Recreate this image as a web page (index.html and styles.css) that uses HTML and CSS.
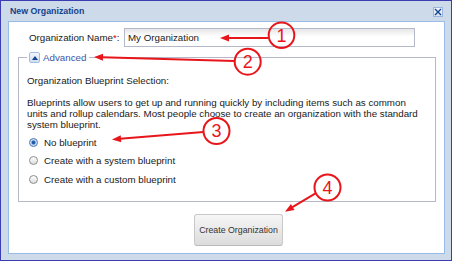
FILE: index.html
```html
<!DOCTYPE html>
<html>
<head>
<meta charset="utf-8">
<title>New Organization</title>
<link rel="stylesheet" href="styles.css">
</head>
<body>
<div class="window">
  <div class="titlebar">
    <span class="title">New Organization</span>
    <span class="close"><svg width="8" height="8" viewBox="0 0 8 8"><path d="M1 1 L7 7 M7 1 L1 7" stroke="#15428b" stroke-width="1.4" fill="none"/></svg></span>
  </div>
  <div class="panel">
    <div class="form-row">
      <label class="field-label">Organization Name<span class="req">*</span>:</label>
      <div class="text-input">My Organization</div>
    </div>
    <fieldset class="advanced">
      <legend class="legend"><span class="toggle"><svg width="6" height="4" viewBox="0 0 6 4"><path d="M0 4 L3 0 L6 4 Z" fill="#15428b"/></svg></span><span class="legend-text">Advanced</span></legend>
      <div class="section-title">Organization Blueprint Selection:</div>
      <p class="desc">Blueprints allow users to get up and running quickly by including items such as common units and rollup calendars. Most people choose to create an organization with the standard system blueprint.</p>
      <div class="radio-list">
        <div class="radio-row"><span class="radio checked"></span><span>No blueprint</span></div>
        <div class="radio-row"><span class="radio"></span><span>Create with a system blueprint</span></div>
        <div class="radio-row"><span class="radio"></span><span>Create with a custom blueprint</span></div>
      </div>
    </fieldset>
    <div class="footer">
      <button class="btn" type="button">Create Organization</button>
    </div>
  </div>
  <svg class="annotations" width="452" height="261" viewBox="0 0 452 261">
    <g fill="none" stroke="#e8161b" stroke-width="2">
      <circle cx="281.5" cy="35.2" r="12.8"/>
      <circle cx="247.7" cy="61.7" r="13"/>
      <circle cx="216.5" cy="131" r="13"/>
      <circle cx="327.5" cy="187.5" r="13"/>
      <line x1="268.5" y1="38" x2="227" y2="38"/>
      <line x1="234.5" y1="61" x2="102" y2="57.3"/>
      <line x1="203.5" y1="132" x2="120" y2="138.8"/>
      <line x1="315.5" y1="193.3" x2="292" y2="207.4"/>
    </g>
    <g fill="#e8161b">
      <polygon points="220,38 229,34.5 229,41.5"/>
      <polygon points="94,57 103.1,53.8 102.9,60.8"/>
      <polygon points="112,139.5 120.7,135.3 121.3,142.3"/>
      <polygon points="285,211.7 290.9,204 294.5,210"/>
    </g>
    <g class="num" fill="#e8161b" text-anchor="middle">
      <text x="281.5" y="41.6">1</text>
      <text x="247.7" y="68.1">2</text>
      <text x="216.5" y="137.4">3</text>
      <text x="327.5" y="193.9">4</text>
    </g>
  </svg>
</div>
</body>
</html>
```
FILE: styles.css
```css
html, body {
  margin: 0;
  padding: 0;
}
body {
  font-family: "Liberation Sans", Arial, sans-serif;
  background: #ffffff;
}
.window {
  position: relative;
  box-sizing: border-box;
  width: 452px;
  height: 261px;
  border: 1px solid #3b3db0;
  background: #cddaea;
  padding: 0 6px 6px 7px;
  display: flex;
  flex-direction: column;
}
.titlebar {
  height: 20px;
  flex: none;
  display: flex;
  align-items: center;
  justify-content: space-between;
  padding: 0 2px 0 2px;
}
.title {
  font-size: 8.8px;
  font-weight: bold;
  color: #15428b;
}
.close {
  width: 10px;
  height: 10px;
  box-sizing: border-box;
  margin-top: 2px;
  border: 1px solid #9ab6dd;
  background: linear-gradient(#f0f5fc, #d6e3f3);
  display: flex;
  align-items: center;
  justify-content: center;
}
.panel {
  flex: 1;
  background: #ffffff;
  border: 1px solid #99bbe8;
  display: flex;
  flex-direction: column;
  font-size: 9.75px;
  color: #1a1a1a;
}
.form-row {
  display: flex;
  align-items: center;
  height: 19px;
  margin: 6px 0 0 20px;
}
.field-label {
  width: 95px;
  flex: none;
}
.req {
  color: #e00000;
}
.text-input {
  box-sizing: border-box;
  width: 291px;
  height: 19px;
  border: 1px solid #b5b8c8;
  background: linear-gradient(#e6e6e6 0, #ffffff 45%);
  padding: 0 3px;
  line-height: 17px;
}
.advanced {
  margin: 5px 8px 0 9px;
  border: 1px solid #b5b8c8;
  padding: 12px 10px 13px 8px;
  min-width: 0;
}
.legend {
  padding: 0 3px 0 2px;
  line-height: 11px;
  height: 11px;
  display: flex;
  align-items: center;
}
.toggle {
  box-sizing: border-box;
  width: 11px;
  height: 11px;
  border: 1px solid #a3bde3;
  border-radius: 2px;
  background: linear-gradient(#f3f7fd, #cfdef3);
  display: flex;
  align-items: center;
  justify-content: center;
  margin-right: 3px;
}
.legend-text {
  color: #3a58a8;
}
.section-title {
  line-height: 11px;
}
.desc {
  margin: 11px 0 0 0;
  line-height: 11px;
}
.radio-list {
  margin-top: 3.3px;
}
.radio-row {
  height: 18.4px;
  display: flex;
  align-items: center;
}
.radio {
  box-sizing: border-box;
  width: 9px;
  height: 9px;
  border-radius: 50%;
  border: 1px solid #8c8c8c;
  background: linear-gradient(#ffffff, #dcdcdc);
  margin: 0 6px 0 2px;
  flex: none;
}
.radio.checked {
  border-color: #4a72a8;
  background: radial-gradient(circle, #1f4f99 0, #2a63b5 1.6px, #bcd6f2 2.4px, #eaf3fd 4px);
}
.footer {
  display: flex;
  justify-content: center;
  padding-left: 24px;
  margin-top: 12px;
}
.btn {
  box-sizing: border-box;
  width: 89px;
  height: 32px;
  border: 1px solid #c9c9c9;
  border-bottom-color: #b9b9b9;
  border-radius: 3px;
  background: linear-gradient(#f6f6f6, #dcdcdc);
  font-family: "Liberation Sans", Arial, sans-serif;
  font-size: 8.8px;
  color: #333333;
  padding: 0;
}
.annotations {
  position: absolute;
  left: -1px;
  top: -1px;
  pointer-events: none;
}
.num text {
  font-family: "Liberation Sans", Arial, sans-serif;
  font-size: 18px;
}
```
